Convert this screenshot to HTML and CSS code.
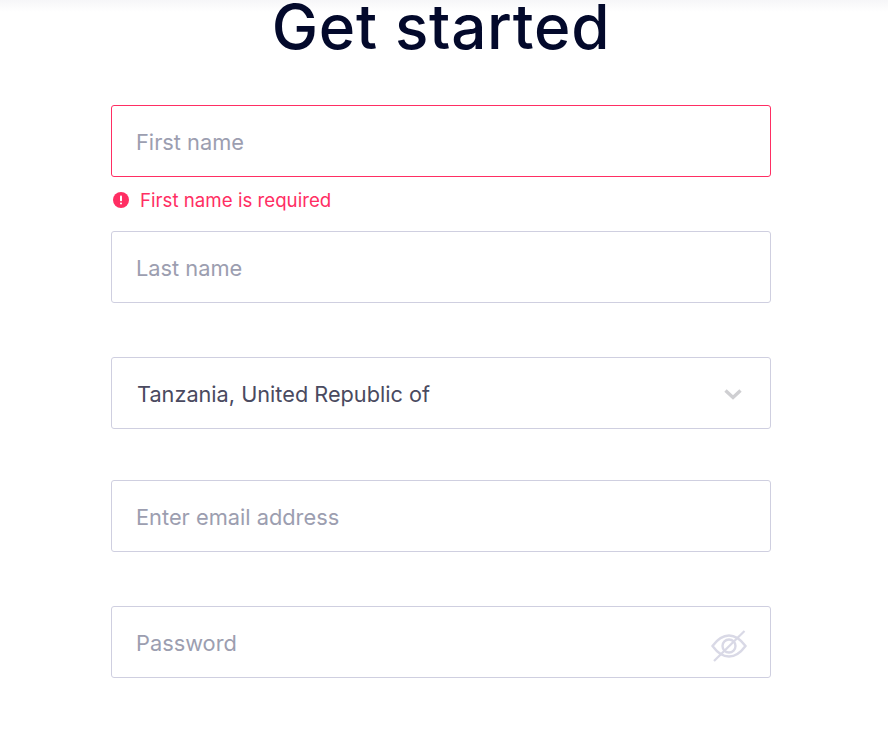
FILE: index.html
```html
<!DOCTYPE html>
<html lang="en">
<head>
    <meta charset="UTF-8">
    <meta name="viewport" content="width=device-width, initial-scale=1.0">
    <title>Get started</title>
    <link rel="stylesheet" href="styles.css">
</head>
<body>

<div class="top-shade"></div>

<form class="signup">
    <h1 class="title">Get started</h1>

    <div class="field first">
        <input class="input input-error" type="text" placeholder="First name">
        <div class="error">
            <svg class="error-icon" viewBox="0 0 18 18" width="18" height="18">
                <circle cx="9" cy="9" r="8" fill="#ff2e63"/>
                <rect x="8" y="4.4" width="2" height="5.8" rx="0.8" fill="#fff"/>
                <rect x="8" y="11.4" width="2" height="2" rx="0.8" fill="#fff"/>
            </svg>
            <span>First name is required</span>
        </div>
    </div>

    <div class="field last">
        <input class="input" type="text" placeholder="Last name">
    </div>

    <div class="field country">
        <div class="input select">
            <span>Tanzania, United Republic of</span>
            <svg class="chevron" viewBox="0 0 20 12" width="20" height="12">
                <path d="M2.5 2.5 L10 9.5 L17.5 2.5" fill="none" stroke="#cfcfd2" stroke-width="3.4"/>
            </svg>
        </div>
    </div>

    <div class="field email">
        <input class="input" type="text" placeholder="Enter email address">
    </div>

    <div class="field password">
        <input class="input" type="password" placeholder="Password">
        <svg class="eye" viewBox="0 0 36 32" width="36" height="32">
            <path d="M1.5 16 C7 8.5 12 5.5 18 5.5 C24 5.5 29 8.5 34.5 16 C29 23.5 24 26.5 18 26.5 C12 26.5 7 23.5 1.5 16 Z" fill="none" stroke="#d9d9e6" stroke-width="2.4"/>
            <circle cx="18" cy="16" r="6.5" fill="none" stroke="#d9d9e6" stroke-width="2.4"/>
            <path d="M33.5 1 L3 31" fill="none" stroke="#d9d9e6" stroke-width="2.2"/>
        </svg>
    </div>
</form>

</body>
</html>
```

FILE: styles.css
```css
body {
    margin: 0;
    height: 735px;
    overflow: hidden;
    background-color: #fff;
    font-family: "Inter", "Noto Sans", sans-serif;
}

.top-shade {
    height: 12px;
    margin-bottom: -12px;
    background: linear-gradient(#f6f6f8, #fff);
}

.signup {
    width: 660px;
    margin-left: 111px;
    display: flex;
    flex-direction: column;
}

.title {
    margin: 0;
    height: 105px;
    font-size: 62px;
    line-height: 54px;
    font-weight: 550;
    letter-spacing: 0.7px;
    color: #03092b;
    text-align: center;
}

.field {
    position: relative;
}

.last {
    margin-top: 13px;
}

.country {
    margin-top: 54px;
}

.email {
    margin-top: 51px;
}

.password {
    margin-top: 54px;
}

.input {
    display: block;
    width: 100%;
    height: 72px;
    box-sizing: border-box;
    padding: 2px 24px 0;
    background: #fff;
    border: 1px solid #cfcfe0;
    border-radius: 3px;
    font-family: inherit;
    font-size: 21.8px;
    outline: none;
}

.input::placeholder {
    color: #9c9eb0;
    opacity: 1;
}

.input-error {
    border-color: #ff2e63;
}

.error {
    display: flex;
    align-items: center;
    gap: 10px;
    height: 36px;
    margin-top: 5px;
    margin-left: 1px;
    color: #ff2e63;
    font-size: 18.7px;
}

.select {
    display: flex;
    align-items: center;
    justify-content: space-between;
    padding: 2px 27px 0 25px;
    color: #4a4a60;
    font-size: 21.7px;
}

.eye {
    position: absolute;
    right: 24px;
    top: 24px;
}
```
